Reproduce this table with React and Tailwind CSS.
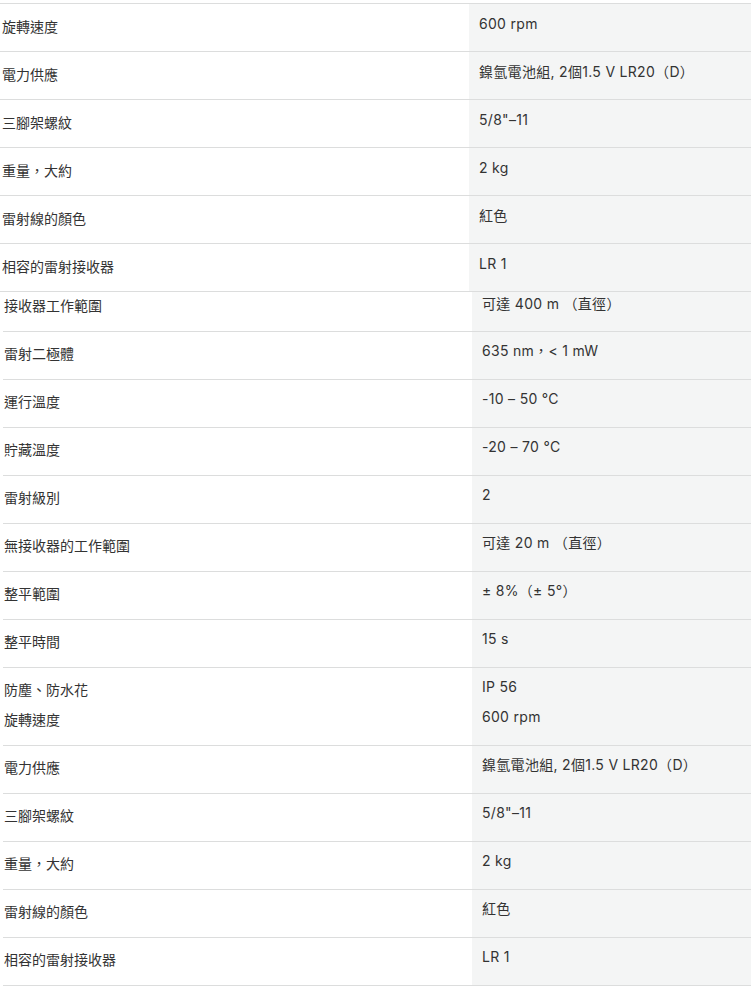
const tableA = [
  ['旋轉速度', '600 rpm'],
  ['電力供應', '鎳氫電池組, 2個1.5 V LR20（D）'],
  ['三腳架螺紋', '5/8"–11'],
  ['重量，大約', '2 kg'],
  ['雷射線的顏色', '紅色'],
  ['相容的雷射接收器', 'LR 1'],
];

const tableB = [
  ['雷射二極體', '635 nm，< 1 mW'],
  ['運行溫度', '-10 – 50 °C'],
  ['貯藏溫度', '-20 – 70 °C'],
  ['雷射級別', '2'],
  ['無接收器的工作範圍', '可達 20 m （直徑）'],
  ['整平範圍', '± 8%（± 5°）'],
  ['整平時間', '15 s'],
];

const tableC = [
  ['電力供應', '鎳氫電池組, 2個1.5 V LR20（D）'],
  ['三腳架螺紋', '5/8"–11'],
  ['重量，大約', '2 kg'],
  ['雷射線的顏色', '紅色'],
  ['相容的雷射接收器', 'LR 1'],
];

function Row({ label, value, wide }) {
  return (
    <div className="flex h-[48px] border-b border-[#dcdddd]">
      <div className={`w-[469px] shrink-0 ${wide ? 'pl-[2px] pt-[13px]' : 'pl-[1px] pt-[12px]'}`}>{label}</div>
      <div className={`flex-1 bg-[#f4f5f5] pl-[10px] tracking-[0.3px] ${wide ? 'pt-[10px]' : 'pt-[9px]'}`}>{value}</div>
    </div>
  );
}

export default function App() {
  return (
    <div className="min-h-screen bg-white pt-[3px] font-['Inter','Noto_Sans_CJK_TC',sans-serif] text-[14px] leading-5 text-[#333]">
      <div className="border-t border-[#dcdddd]">
        {tableA.map(([l, v]) => (
          <Row key={l} label={l} value={v} wide />
        ))}
      </div>

      <div className="ml-[3px]">
        <div className="flex h-[40px] border-b border-[#dcdddd]">
          <div className="w-[469px] shrink-0 pl-[1px] pt-[4px]">接收器工作範圍</div>
          <div className="flex-1 bg-[#f4f5f5] pl-[10px] pt-[2px] tracking-[0.3px]">可達 400 m （直徑）</div>
        </div>
        {tableB.map(([l, v]) => (
          <Row key={l} label={l} value={v} />
        ))}
        <div className="flex h-[78px] border-b border-[#dcdddd]">
          <div className="flex w-[469px] shrink-0 flex-col gap-[10px] pl-[1px] pt-[12px]">
            <span>防塵、防水花</span>
            <span>旋轉速度</span>
          </div>
          <div className="flex flex-1 flex-col gap-[10px] bg-[#f4f5f5] pl-[10px] pt-[9px] tracking-[0.3px]">
            <span>IP 56</span>
            <span>600 rpm</span>
          </div>
        </div>
        {tableC.map(([l, v]) => (
          <Row key={l} label={l} value={v} />
        ))}
      </div>
    </div>
  );
}
